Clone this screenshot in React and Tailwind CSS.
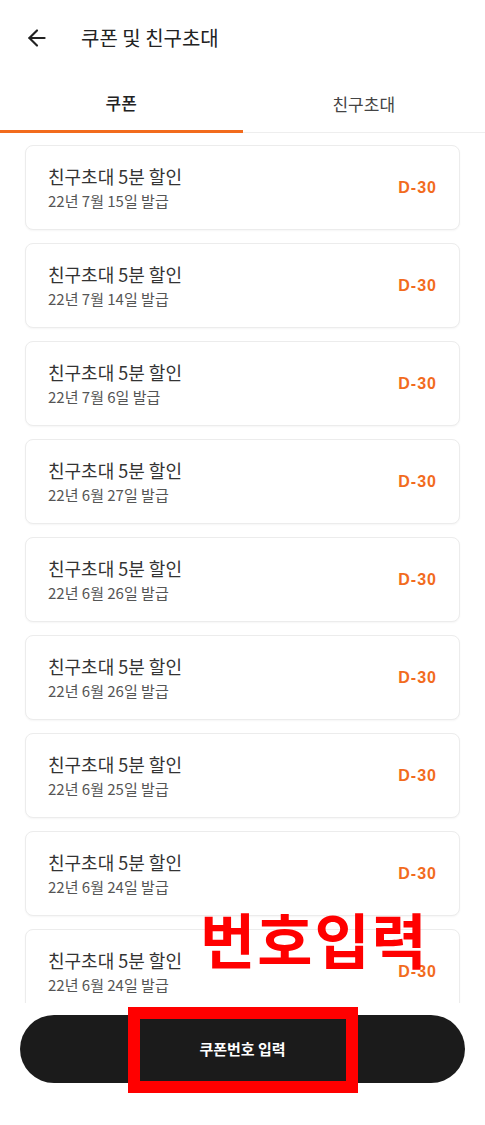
import { ArrowLeft } from 'lucide-react';

const coupons = [
    '22년 7월 15일 발급',
    '22년 7월 14일 발급',
    '22년 7월 6일 발급',
    '22년 6월 27일 발급',
    '22년 6월 26일 발급',
    '22년 6월 26일 발급',
    '22년 6월 25일 발급',
    '22년 6월 24일 발급',
    '22년 6월 24일 발급',
];

function CouponCard({ date }) {
    return (
        <div className="h-[85px] shrink-0 flex items-center justify-between rounded-lg border border-[#ececec] bg-white pl-[22px] pr-[22px] shadow-[0_1px_2px_rgba(0,0,0,0.04)]">
            <div className="flex flex-col">
                <span className="text-[18px] leading-[22px] text-[#333]">친구초대 5분 할인</span>
                <span className="mt-[4px] text-[15px] leading-[20px] text-[#555]">{date}</span>
            </div>
            <span className="text-[16px] font-bold tracking-[1px] text-[#f26b1d] font-['Liberation_Sans',sans-serif]">D-30</span>
        </div>
    );
}

export default function App() {
    return (
        <div className="relative w-[485px] h-[1125px] bg-white overflow-hidden font-['Noto_Sans_CJK_KR','Noto_Sans',sans-serif]">
            <header className="h-[76px] flex items-center pl-[24px]">
                <ArrowLeft size={26} strokeWidth={2} className="text-[#222]" />
                <h1 className="ml-[31px] text-[20px] text-[#222]">쿠폰 및 친구초대</h1>
            </header>

            <nav className="flex h-[57px]">
                <div className="flex-1 flex items-center justify-center border-b-[3px] border-[#f26b1d] text-[17px] font-medium text-[#222]">쿠폰</div>
                <div className="flex-1 flex items-center justify-center border-b border-[#eee] text-[17px] text-[#444]">친구초대</div>
            </nav>

            <div className="h-[870px] overflow-hidden px-[25px] pt-[12px] flex flex-col gap-[13px]">
                {coupons.map((d, i) => (
                    <CouponCard key={i} date={d} />
                ))}
            </div>

            <div className="px-[20px] pt-[12px]">
                <button className="w-full h-[68px] rounded-full bg-[#1b1b1b] text-white text-[15px] font-bold">쿠폰번호 입력</button>
            </div>

            <div className="absolute left-[128px] top-[1007px] w-[230px] h-[86px] border-[12px] border-[#ff0000]" />
            <div className="absolute left-[200px] top-[898px] text-[60px] leading-[80px] font-bold tracking-[2px] text-[#ff0000]">번호입력</div>
        </div>
    );
}
